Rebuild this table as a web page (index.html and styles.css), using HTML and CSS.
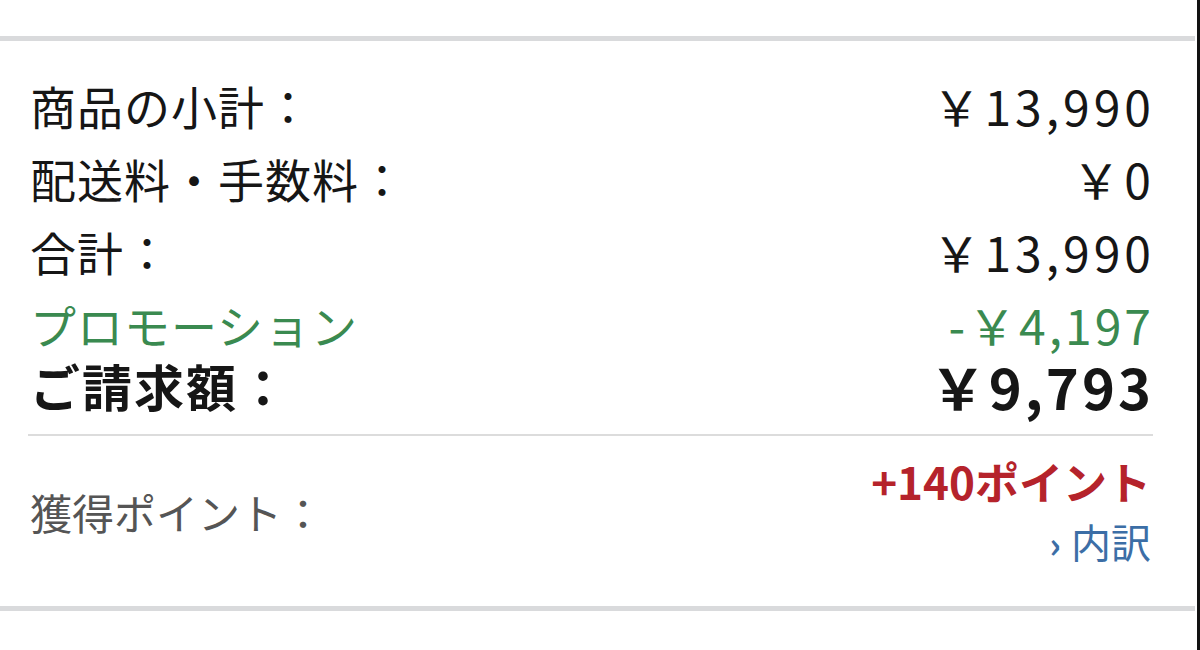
FILE: index.html
```html
<!DOCTYPE html>
<html lang="ja">
<head>
<meta charset="utf-8">
<link rel="stylesheet" href="styles.css">
</head>
<body>
<div class="page">
  <div class="top-space"></div>
  <div class="rule"></div>
  <section class="summary">
    <div class="row"><span class="label">商品の小計：</span><span class="value">￥13,990</span></div>
    <div class="row"><span class="label">配送料・手数料：</span><span class="value">￥0</span></div>
    <div class="row"><span class="label">合計：</span><span class="value">￥13,990</span></div>
    <div class="row promo"><span class="label">プロモーション</span><span class="value">-￥4,197</span></div>
    <div class="row total"><span class="label">ご請求額：</span><span class="value">￥9,793</span></div>
    <div class="divider"></div>
    <div class="points">
      <span class="points-label">獲得ポイント：</span>
      <div class="points-right">
        <span class="points-value">+140ポイント</span>
        <a class="detail-link"><span class="chev">›</span>内訳</a>
      </div>
    </div>
  </section>
  <div class="rule"></div>
  <div class="bottom-space"></div>
</div>
</body>
</html>
```

FILE: styles.css
```css
html, body {
  margin: 0;
  padding: 0;
  background: #ffffff;
}

body {
  font-family: "Noto Sans CJK JP", "Noto Sans", sans-serif;
  color: #161616;
}

.page {
  width: 1197px;
  height: 650px;
  border-right: 3px solid #111;
  display: flex;
  flex-direction: column;
}

.top-space {
  height: 36px;
}

.rule {
  height: 5px;
  background: #d9dadc;
  margin-right: 2px;
}

.summary {
  padding: 27px 46px 35px 30px;
}

.row {
  display: flex;
  justify-content: space-between;
  align-items: center;
  height: 73px;
  font-size: 46px;
}

.row .label {
  letter-spacing: 1px;
}

.row .value {
  font-size: 48px;
  letter-spacing: 4px;
  margin-right: -4px;
}

.promo {
  color: #3a8a50;
}

.promo .value {
  letter-spacing: 3px;
  margin-right: -3px;
}

.total {
  height: 50px;
  font-weight: 700;
  font-size: 50px;
}

.total .label {
  letter-spacing: 2px;
}

.total .value {
  font-size: 56px;
  letter-spacing: 3px;
  margin-right: -3px;
}

.divider {
  height: 2px;
  background: #dcdcdc;
  margin: 24px -2px 15px -2px;
}

.points {
  display: flex;
  justify-content: space-between;
  align-items: center;
}

.points-label {
  font-size: 42px;
  color: #555;
}

.points-right {
  display: flex;
  flex-direction: column;
  align-items: flex-end;
}

.points-value {
  height: 60px;
  line-height: 60px;
  font-size: 44px;
  font-weight: 700;
  color: #b5232b;
}

.detail-link {
  height: 60px;
  line-height: 60px;
  font-size: 40px;
  color: #3c6ea6;
}

.chev {
  font-size: 36px;
  font-weight: 700;
  margin-right: 10px;
}

.bottom-space {
  flex: 1;
}
```
